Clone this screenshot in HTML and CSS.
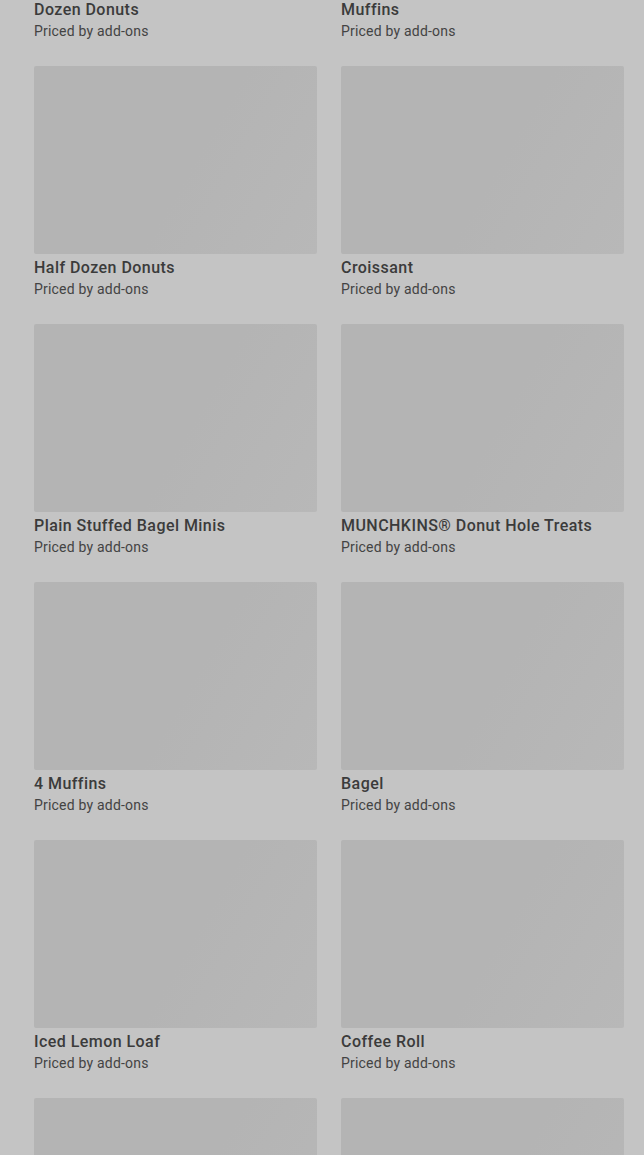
FILE: index.html
```html
<!DOCTYPE html>
<html lang="en">
<head>
    <meta charset="UTF-8">
    <meta name="viewport" content="width=device-width, initial-scale=1.0">
    <title>Menu</title>
    <link rel="stylesheet" href="styles.css">
</head>
<body>
    <div class="menu">
        <div class="item">
            <div class="photo"></div>
            <h3>Dozen Donuts</h3>
            <p>Priced by add-ons</p>
        </div>
        <div class="item">
            <div class="photo"></div>
            <h3>Muffins</h3>
            <p>Priced by add-ons</p>
        </div>
        <div class="item">
            <div class="photo"></div>
            <h3>Half Dozen Donuts</h3>
            <p>Priced by add-ons</p>
        </div>
        <div class="item">
            <div class="photo"></div>
            <h3>Croissant</h3>
            <p>Priced by add-ons</p>
        </div>
        <div class="item">
            <div class="photo"></div>
            <h3>Plain Stuffed Bagel Minis</h3>
            <p>Priced by add-ons</p>
        </div>
        <div class="item">
            <div class="photo"></div>
            <h3>MUNCHKINS® Donut Hole Treats</h3>
            <p>Priced by add-ons</p>
        </div>
        <div class="item">
            <div class="photo"></div>
            <h3>4 Muffins</h3>
            <p>Priced by add-ons</p>
        </div>
        <div class="item">
            <div class="photo"></div>
            <h3>Bagel</h3>
            <p>Priced by add-ons</p>
        </div>
        <div class="item">
            <div class="photo"></div>
            <h3>Iced Lemon Loaf</h3>
            <p>Priced by add-ons</p>
        </div>
        <div class="item">
            <div class="photo"></div>
            <h3>Coffee Roll</h3>
            <p>Priced by add-ons</p>
        </div>
        <div class="item">
            <div class="photo"></div>
        </div>
        <div class="item">
            <div class="photo"></div>
        </div>
    </div>
</body>
</html>
```

FILE: styles.css
```css
body {
    margin: 0;
    background-color: #c4c4c4; /* page under the grey overlay */
    font-family: Roboto, "Liberation Sans", Arial, sans-serif;
    color: #3b3b3b;
    overflow: hidden;
}

/* page is scrolled a bit, first row sits above the top */
.menu {
    display: grid;
    grid-template-columns: 1fr 1fr;
    column-gap: 24px;
    row-gap: 25px;
    padding: 0 20px 0 34px;
    margin-top: -192px;
}

.item h3 {
    margin: 3px 0 0;
    font-size: 16px;
    line-height: 22px;
    font-weight: 500;
    letter-spacing: 0.45px;
    white-space: nowrap;
}

.item p {
    margin: 0;
    font-size: 14px;
    line-height: 20px;
    letter-spacing: 0.2px;
    color: #434343;
}

.photo {
    height: 188px;
    border-radius: 2px;
    background: linear-gradient(120deg, #b4b4b4 0%, #b4b4b4 55%, #b8b8b8 100%);
}
```
